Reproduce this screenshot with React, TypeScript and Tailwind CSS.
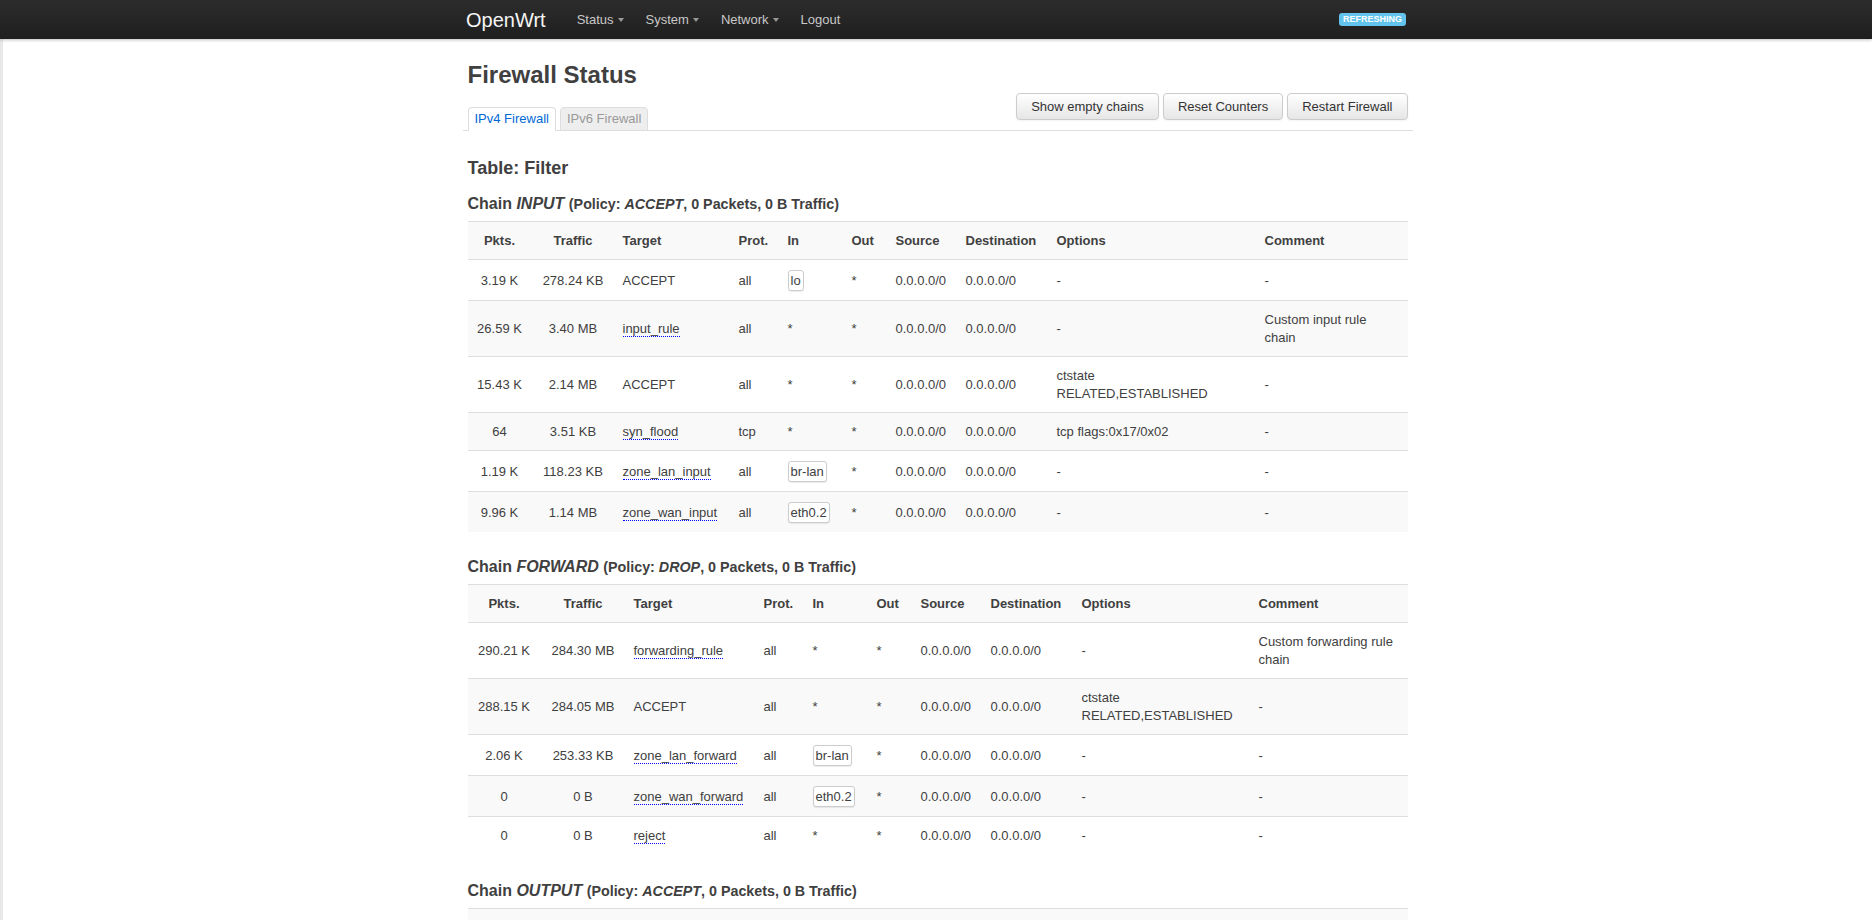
import React from "react";

type Row = {
  pkts: string;
  traffic: string;
  target: string;
  link?: boolean;
  prot: string;
  inIf?: string;
  options: string[];
  comment: string[];
};

const INPUT_ROWS: Row[] = [
  { pkts: "3.19 K", traffic: "278.24 KB", target: "ACCEPT", prot: "all", inIf: "lo", options: ["-"], comment: ["-"] },
  { pkts: "26.59 K", traffic: "3.40 MB", target: "input_rule", link: true, prot: "all", options: ["-"], comment: ["Custom input rule", "chain"] },
  { pkts: "15.43 K", traffic: "2.14 MB", target: "ACCEPT", prot: "all", options: ["ctstate", "RELATED,ESTABLISHED"], comment: ["-"] },
  { pkts: "64", traffic: "3.51 KB", target: "syn_flood", link: true, prot: "tcp", options: ["tcp flags:0x17/0x02"], comment: ["-"] },
  { pkts: "1.19 K", traffic: "118.23 KB", target: "zone_lan_input", link: true, prot: "all", inIf: "br-lan", options: ["-"], comment: ["-"] },
  { pkts: "9.96 K", traffic: "1.14 MB", target: "zone_wan_input", link: true, prot: "all", inIf: "eth0.2", options: ["-"], comment: ["-"] },
];

const FORWARD_ROWS: Row[] = [
  { pkts: "290.21 K", traffic: "284.30 MB", target: "forwarding_rule", link: true, prot: "all", options: ["-"], comment: ["Custom forwarding rule", "chain"] },
  { pkts: "288.15 K", traffic: "284.05 MB", target: "ACCEPT", prot: "all", options: ["ctstate", "RELATED,ESTABLISHED"], comment: ["-"] },
  { pkts: "2.06 K", traffic: "253.33 KB", target: "zone_lan_forward", link: true, prot: "all", inIf: "br-lan", options: ["-"], comment: ["-"] },
  { pkts: "0", traffic: "0 B", target: "zone_wan_forward", link: true, prot: "all", inIf: "eth0.2", options: ["-"], comment: ["-"] },
  { pkts: "0", traffic: "0 B", target: "reject", link: true, prot: "all", options: ["-"], comment: ["-"] },
];

const INPUT_COLS = [64, 83, 116, 49, 64, 44, 70, 91, 208, 151];
const FORWARD_COLS = [73, 85, 130, 49, 64, 44, 70, 91, 177, 157];

const HEADERS = ["Pkts.", "Traffic", "Target", "Prot.", "In", "Out", "Source", "Destination", "Options", "Comment"];

function Caret() {
  return <span className="ml-1 inline-block h-0 w-0 border-x-[3px] border-t-[4px] border-x-transparent border-t-[#999] align-middle" />;
}

function Lines({ lines }: { lines: string[] }) {
  return (
    <>
      {lines.map((l, i) => (
        <React.Fragment key={i}>
          {i > 0 && <br />}
          {l}
        </React.Fragment>
      ))}
    </>
  );
}

function Iface({ name }: { name: string }) {
  return <span className="inline-block rounded-[3px] border border-[#ccc] bg-white px-[2px] py-px leading-[17px] shadow-[0_1px_1px_rgba(0,0,0,0.08)]">{name}</span>;
}

function ChainTable({ cols, rows }: { cols: number[]; rows: Row[] }) {
  const td = "px-2 pt-2.5 pb-[9px]";
  return (
    <table className="w-full table-fixed border-collapse border-t border-[#ddd] text-[13px] leading-[18px]">
      <colgroup>
        {cols.map((w, i) => <col key={i} style={{ width: w }} />)}
      </colgroup>
      <thead>
        <tr className="bg-[#f9f9f9]">
          {HEADERS.map((h, i) => (
            <th key={h} className={`px-2 pt-2.5 pb-[9px] font-bold ${i < 2 ? "text-center" : "text-left"}`}>{h}</th>
          ))}
        </tr>
      </thead>
      <tbody>
        {rows.map((r, i) => (
          <tr key={i} className={`border-t border-[#ddd] ${i % 2 === 1 ? "bg-[#f9f9f9]" : "bg-white"}`}>
            <td className={`${td} text-center`}>{r.pkts}</td>
            <td className={`${td} text-center`}>{r.traffic}</td>
            <td className={td}>
              {r.link ? <span className="cursor-help border-b border-dotted border-[#00f]">{r.target}</span> : r.target}
            </td>
            <td className={td}>{r.prot}</td>
            <td className={td}>{r.inIf ? <Iface name={r.inIf} /> : "*"}</td>
            <td className={td}>*</td>
            <td className={td}>0.0.0.0/0</td>
            <td className={td}>0.0.0.0/0</td>
            <td className={td}><Lines lines={r.options} /></td>
            <td className={td}><Lines lines={r.comment} /></td>
          </tr>
        ))}
      </tbody>
    </table>
  );
}

function ChainTitle({ name, policy }: { name: string; policy: string }) {
  return (
    <h3 className="mb-[7px] text-[16px] font-bold leading-[20px]">
      Chain <em>{name}</em>{" "}
      <span className="text-[14.3px]">(Policy: <em>{policy}</em>, 0 Packets, 0 B Traffic)</span>
    </h3>
  );
}

export default function App() {
  return (
    <div className="min-h-screen bg-white text-[#404040]" style={{ fontFamily: '"Liberation Sans", Arial, sans-serif' }}>
      <div className="relative z-10 h-[39px] bg-gradient-to-b from-[#2c2c2c] to-[#1f1f1f] shadow-[0_1px_3px_rgba(0,0,0,0.25)]">
        <div className="mx-auto flex h-full w-[940px] items-center">
          <span className="text-[20px] leading-none text-[#f5f5f5]">OpenWrt</span>
          <nav className="ml-[31px] flex items-center gap-[22px] text-[13px] text-[#c8c8c8]">
            <span className="flex items-center">Status<Caret /></span>
            <span className="flex items-center">System<Caret /></span>
            <span className="flex items-center">Network<Caret /></span>
            <span>Logout</span>
          </nav>
          <span className="ml-auto rounded-[3px] bg-[#62c3ec] px-[4px] text-[9px] font-bold leading-[13px] text-white">REFRESHING</span>
        </div>
      </div>

      <div className="border-l-[3px] border-[#e8e8e8]">
        <div className="mx-auto w-[940px] pb-10 pt-[22px]">
          <h2 className="text-[24px] font-bold leading-[28px]">Firewall Status</h2>

          <div className="-mx-[5px] flex items-end justify-between border-b border-[#ddd] px-[5px]">
            <ul className="-mb-px flex gap-[4px] text-[13px] leading-[22px]">
              <li className="rounded-t-[4px] border border-[#ddd] border-b-white bg-white px-[6px] text-[#0069d6]">IPv4 Firewall</li>
              <li className="rounded-t-[4px] border border-[#ddd] bg-[#eee] px-[6px] text-[#999]">IPv6 Firewall</li>
            </ul>
            <div className="mb-[10px] mt-[4px] flex gap-[4px]">
              {["Show empty chains", "Reset Counters", "Restart Firewall"].map(b => (
                <button key={b} className="h-[27px] rounded-[4px] border border-[#ccc] bg-gradient-to-b from-white to-[#e6e6e6] px-[14px] text-[13px] text-[#333] shadow-[inset_0_1px_0_rgba(255,255,255,0.2),0_1px_2px_rgba(0,0,0,0.05)]">
                  {b}
                </button>
              ))}
            </div>
          </div>

          <h3 className="mb-4 mt-[27px] text-[18px] font-bold leading-[20px]">Table: Filter</h3>

          <ChainTitle name="INPUT" policy="ACCEPT" />
          <ChainTable cols={INPUT_COLS} rows={INPUT_ROWS} />

          <div className="mt-[25px]">
            <ChainTitle name="FORWARD" policy="DROP" />
            <ChainTable cols={FORWARD_COLS} rows={FORWARD_ROWS} />
          </div>

          <div className="mt-[27px]">
            <ChainTitle name="OUTPUT" policy="ACCEPT" />
            <ChainTable cols={INPUT_COLS} rows={[]} />
          </div>
        </div>
      </div>
    </div>
  );
}
